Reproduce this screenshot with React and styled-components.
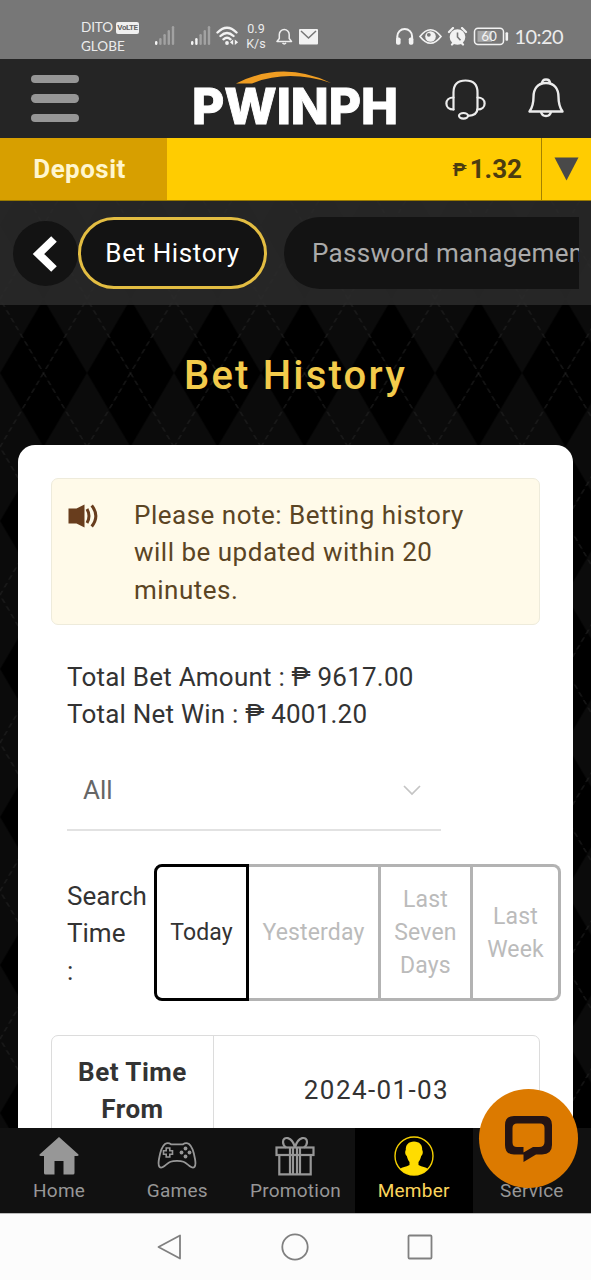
import React, { useState } from "react";
import styled, { createGlobalStyle, css } from "styled-components";

const GlobalStyle = createGlobalStyle`
  * { box-sizing: border-box; }
  body {
    margin: 0;
    background: #0a0a0a;
    font-family: Roboto, "Noto Sans", sans-serif;
  }
  button { font-family: inherit; border: 0; padding: 0; background: none; }
`;

const Screen = styled.div`
  position: relative;
  display: flex;
  flex-direction: column;
  width: 591px;
  height: 1280px;
  overflow: hidden;
`;

/* status bar */
const StatusBar = styled.div`
  flex: none;
  display: flex;
  justify-content: space-between;
  height: 59px;
  padding: 18px 28px 0 81px;
  background: #777;
  color: #ececec;
`;
const StatusLeft = styled.div`
  display: flex;
  align-items: flex-start;
`;
const Carriers = styled.div`
  width: 74px;
  font-family: Lato, sans-serif;
  font-size: 13.5px;
  line-height: 19px;
  font-weight: 400;
`;
const Carrier = styled.div`
  display: flex;
  align-items: center;
  height: 19px;
  letter-spacing: ${(p) => p.$spacing || "0"};
`;
const Volte = styled.span`
  width: 23px;
  height: 12px;
  margin-left: 3px;
  border-radius: 2px;
  background: #f0f0f0;
  color: #666;
  font: 700 8px/12px Roboto, sans-serif;
  text-align: center;
  letter-spacing: -0.4px;
`;
const Speed = styled.div`
  width: 22px;
  margin: 3px 0 0 6px;
  font-size: 12.5px;
  line-height: 15px;
  text-align: center;
`;
const StatusRight = styled.div`
  display: flex;
  align-items: flex-start;
`;
const Clock = styled.div`
  margin-left: 4px;
  padding-top: 6px;
  font-family: Lato, sans-serif;
  font-size: 20px;
  line-height: 24px;
  font-weight: 400;
  letter-spacing: -0.6px;
`;

/* header */
const Header = styled.header`
  flex: none;
  display: flex;
  align-items: center;
  height: 79px;
  padding: 0 25px 0 31px;
  background: #252525;
`;
const Burger = styled.button`
  display: flex;
  flex-direction: column;
  gap: 11px;
  width: 48px;
  & > i {
    height: 8.5px;
    border-radius: 5px;
    background: #969696;
  }
`;
const LogoWrap = styled.div`
  width: 208px;
  height: 79px;
  margin: 0 45px 0 112px;
`;
const HeaderIcons = styled.div`
  display: flex;
  justify-content: space-between;
  flex: 1;
`;

/* wallet */
const Wallet = styled.div`
  flex: none;
  display: flex;
  height: 63px;
  background: #ffcc01;
  border-bottom: 1px solid #9a7a00;
`;
const DepositButton = styled.button`
  width: 167px;
  padding-right: 8px;
  background: #d79f00;
  color: #fff6cf;
  font-size: 26px;
  font-weight: 700;
  letter-spacing: 0.45px;
`;
const Balance = styled.div`
  flex: 1;
  display: flex;
  align-items: center;
  justify-content: flex-end;
  gap: 3px;
  padding-right: 19px;
  border-right: 1px solid #a58200;
  color: #4c3d10;
  font-size: 26px;
  font-weight: 700;
  & > small { font-size: 19px; }
`;
const Expand = styled.button`
  display: flex;
  align-items: center;
  justify-content: center;
  width: 49px;
`;

/* page body */
const Body = styled.main`
  position: relative;
  flex: 1;
  min-height: 0;
  overflow: hidden;
  background: #0a0a0a;
`;
const Argyle = styled.svg`
  position: absolute;
  inset: 0;
  width: 100%;
  height: 100%;
`;
const Content = styled.div`
  position: relative;
`;
const TabStrip = styled.div`
  display: flex;
  align-items: center;
  height: 104px;
  padding: 0 12px 0 13px;
  background: rgba(43, 43, 43, 0.85);
`;
const BackButton = styled.button`
  display: flex;
  align-items: center;
  justify-content: center;
  flex: none;
  width: 65px;
  height: 65px;
  border-radius: 50%;
  background: #131313;
`;
const Tabs = styled.div`
  display: flex;
  gap: 17px;
  flex: 1;
  overflow: hidden;
`;
const Tab = styled.button`
  flex: none;
  height: 72px;
  padding: 0 28px;
  border-radius: 36px;
  background: #131313;
  color: #aaa;
  font-size: 26px;
  letter-spacing: ${(p) => p.$spacing}px;
  white-space: nowrap;
  ${(p) =>
    p.$active &&
    css`
      width: 189px;
      padding: 0;
      border: 3px solid #e3bd42;
      color: #fff;
    `}
`;
const Title = styled.h1`
  margin: 0;
  padding-top: 1px;
  height: 140px;
  color: #f3cb4b;
  font-size: 40px;
  font-weight: 500;
  line-height: 140px;
  letter-spacing: 2.2px;
  text-align: center;
`;
const Card = styled.section`
  margin: 0 18px;
  height: 760px;
  padding: 33px 33px 0;
  border-radius: 17px 17px 0 0;
  background: #fff;
  color: #333;
  font-size: 26px;
  line-height: 37.4px;
`;
const Notice = styled.div`
  display: flex;
  height: 147px;
  padding: 18px 16px 0;
  border: 1.5px solid #eeebdb;
  border-radius: 7px;
  background: #fffae9;
  color: #5b4524;
  & > svg { flex: none; margin: 7px 35px 0 0; }
  & > p { margin: 0; width: 350px; letter-spacing: 0.5px; }
`;
const Totals = styled.div`
  margin: 34px 0 0 16px;
  letter-spacing: 0.22px;
`;
const SelectBox = styled.div`
  display: flex;
  align-items: center;
  justify-content: space-between;
  width: 374px;
  height: 79px;
  margin: 18px 0 0 16px;
  padding: 0 20px 0 16px;
  border-bottom: 2px solid #e2e2e2;
  color: #666;
`;
const SearchRow = styled.div`
  display: flex;
  align-items: flex-start;
  margin: 33px -21px 0 16px;
`;
const SearchLabel = styled.div`
  width: 87px;
  padding-top: 14px;
`;
const Segments = styled.div`
  display: flex;
  height: 137px;
`;
const Segment = styled.button`
  width: ${(p) => p.$width}px;
  padding-top: 1px;
  border: 3px solid ${(p) => (p.$active ? "#000" : "#b3b3b3")};
  border-left-width: ${(p) => (p.$active ? 3 : 0)}px;
  color: ${(p) => (p.$active ? "#333" : "#bbb")};
  font-size: 23px;
  line-height: 33px;
  letter-spacing: 0.15px;
  &:first-child { border-radius: 8px 0 0 8px; }
  &:last-child { border-radius: 0 8px 8px 0; }
`;
const RangeTable = styled.div`
  display: flex;
  width: 489px;
  height: 111px;
  margin-top: 34px;
  border: 1.5px solid #dcdcdc;
  border-radius: 7px;
`;
const RangeHead = styled.div`
  width: 162px;
  padding: 18px 20px 0;
  border-right: 1.5px solid #dcdcdc;
  font-weight: 700;
  letter-spacing: 0.5px;
  text-align: center;
`;
const RangeValue = styled.div`
  flex: 1;
  display: flex;
  align-items: center;
  justify-content: center;
  letter-spacing: 1.4px;
`;

/* bottom bars */
const TabBar = styled.nav`
  flex: none;
  display: grid;
  grid-template-columns: repeat(5, 1fr);
  height: 85px;
  background: #111;
`;
const TabItem = styled.a`
  display: flex;
  flex-direction: column;
  align-items: center;
  padding-top: 8px;
  background: ${(p) => (p.$active ? "#000" : "transparent")};
  color: ${(p) => (p.$active ? "#fbd55c" : "#979797")};
  & > span {
    margin-top: 2px;
    font-size: 19px;
    line-height: 25px;
    letter-spacing: 0.25px;
  }
`;
const SystemNav = styled.div`
  flex: none;
  display: flex;
  align-items: center;
  justify-content: center;
  gap: 98px;
  height: 67px;
  padding-right: 2px;
  border-top: 1px solid #bbb;
  background: #fcfcfc;
`;
const ChatButton = styled.button`
  position: absolute;
  right: 13px;
  top: 1089px;
  display: flex;
  align-items: center;
  justify-content: center;
  width: 99px;
  height: 99px;
  border-radius: 50%;
  background: #dc7a00;
`;

const Signal = ({ strong, gap }) => (
  <svg width="20" height="20" viewBox="0 0 20 20" style={{ marginTop: 8, marginRight: gap }}>
    {[4, 7, 11, 15, 19].map((h, i) => (
      <rect key={h} x={i * 4.2} y={19 - h} width="2.4" height={h} rx="1.2" fill={i < strong ? "#f4f4f4" : "#a2a2a2"} />
    ))}
  </svg>
);

const Wifi = () => (
  <svg width="23" height="20" viewBox="0 0 23 20" fill="none" stroke="#f2f2f2" strokeWidth="2.4" style={{ marginTop: 8 }}>
    <path d="M1.5 6.5Q11 -3 20.5 6.5M4.500 10Q11 3.800 17.500 10M7.500 13.300Q11 10 14.500 13.300" strokeLinecap="round" />
    <circle cx="11" cy="17" r="1.900" fill="#f2f2f2" stroke="none" />
    <path d="M17.200 13.500v5.500l-3.300-2.750zM18.800 13.500v5.500l3.300-2.750z" fill="#f2f2f2" stroke="none" />
  </svg>
);

const StatusIcons = () => (
  <svg width="46" height="20" viewBox="0 0 46 20" style={{ marginTop: 9, marginLeft: 9 }}>
    <path d="M1 14.500h14.500l-2.300-3V7.500a4.950 5 0 0 0-9.900 0v4zM6.500 16q1.750 1.800 3.500 0" fill="none" stroke="#eee" strokeWidth="1.500" strokeLinejoin="round" />
    <rect x="23" y="2" width="19" height="15.500" rx="1" fill="#f2f2f2" />
    <path d="M25 4l7.500 7 7.500-7" fill="none" stroke="#777" strokeWidth="1.500" />
  </svg>
);

const RightIcons = () => (
  <svg width="116" height="20" viewBox="0 0 116 20" style={{ marginTop: 9 }}>
    <path d="M2.300 12V9.400a7.400 7.400 0 0 1 14.800 0V12" fill="none" stroke="#f2f2f2" strokeWidth="2" />
    <rect x="1" y="10.500" width="4.600" height="7.200" rx="1.800" fill="#f2f2f2" />
    <rect x="13.800" y="10.500" width="4.600" height="7.200" rx="1.800" fill="#f2f2f2" />
    <path d="M25 9.500q10.500 -13.500 21 0q-10.500 13.500 -21 0z" fill="none" stroke="#f2f2f2" strokeWidth="1.700" />
    <circle cx="35.500" cy="9.500" r="5.300" fill="#f2f2f2" />
    <circle cx="33.800" cy="7.800" r="1.900" fill="#777" />
    <circle cx="62.500" cy="10" r="7.800" fill="#f2f2f2" />
    <path d="M54 5l4-4M71 5l-4-4M57 17.500l1.500-1.500M68 17.500l-1.500-1.500" stroke="#f2f2f2" strokeWidth="2.200" strokeLinecap="round" />
    <path d="M62.500 5.500V10l3 3.300" fill="none" stroke="#777" strokeWidth="1.600" />
    <rect x="79.500" y="1.200" width="29" height="16.300" rx="3.500" fill="none" stroke="#f2f2f2" strokeWidth="1.500" />
    <rect x="82.500" y="4" width="14.500" height="10.800" fill="#a8a8a8" />
    <text x="94" y="14.300" fontSize="13.500" fontFamily="Lato" fill="#f2f2f2" textAnchor="middle">60</text>
    <rect x="110.500" y="5.200" width="2.600" height="8.500" rx="1" fill="#f2f2f2" />
  </svg>
);

const Logo = () => (
  <svg width="208" height="79" viewBox="0 0 208 79">
    <path d="M45 24.500Q92 1 140 24Q97 10 61 24.500z" fill="#ef9d22" />
    <text x="1" y="65" fill="#fff" stroke="#fff" strokeWidth="0.900" fontFamily="Inter" fontWeight="800" fontSize="50" textLength="206" lengthAdjust="spacingAndGlyphs">
      PWINPH
    </text>
  </svg>
);

const Headset = () => (
  <svg width="42" height="42" viewBox="0 0 42 42" fill="none" stroke="#ececec" strokeWidth="2.200" strokeLinecap="round">
    <path d="M9.500 31.500V14.500Q9.500 2.500 21.500 2.500Q33.500 2.500 33.500 14.500V30Q33.500 37.500 24 37.800" />
    <path d="M9.500 19.500C0 19.500 0 31.500 9.500 31.500M33.500 19.500C43 19.500 43 31.500 33.500 31.500" />
    <ellipse cx="19.500" cy="37.800" rx="4.500" ry="2.800" />
  </svg>
);

const Bell = () => (
  <svg width="40" height="42" viewBox="0 0 40 42" fill="none" stroke="#ececec" strokeWidth="2.400" strokeLinejoin="round">
    <path d="M20 5C11.500 5 7.500 11 7.500 19C7.500 27 6 30 3.500 33.500H36.500C34 30 32.500 27 32.500 19C32.500 11 28.500 5 20 5z" />
    <path d="M16 5.500Q16 1.500 20 1.500Q24 1.500 24 5.500M15 34Q16 38 20 38Q24 38 25 34" />
  </svg>
);

const Speaker = () => (
  <svg width="31" height="24" viewBox="0 0 31 24">
    <path d="M0.500 4.500H8.500L16.500 0.500V23.500L8.500 19.500H0.500z" fill="#683d1d" />
    <path d="M19 5Q23 12 19 19M23.700 1.500Q32 12 23.700 22.500" fill="none" stroke="#683d1d" strokeWidth="3" />
  </svg>
);

const icons = {
  home: <path d="M20 1L0.500 18.500Q0 20 2 20H5V37Q5 38.500 6.500 38.500H15.500V25H24.500V38.500H34Q35.500 38.500 35.500 37V20H38Q40 20 39.500 18.500z" fill="#979797" />,
  games: (
    <g fill="none" stroke="#979797" strokeWidth="1.800">
      <path d="M8 8Q11 6 14 8.300H26Q29 6 32 8Q36 11 38 23C39.500 31 37 33.500 32.500 30C28 26.500 27 24.800 20 24.800C13 24.800 12 26.500 7.500 30C3 33.500 0.500 31 2 23Q4 11 8 8z" />
      <path d="M9.200 12h3.600v2.700h2.700v3.600h-2.700v2.700h-3.600v-2.700h-2.700v-3.600h2.700z" strokeWidth="1.600" />
      <g fill="#979797" stroke="none">
        <circle cx="28.500" cy="12.500" r="1.900" />
        <circle cx="28.500" cy="20.500" r="1.900" />
        <circle cx="24.500" cy="16.500" r="1.900" />
        <circle cx="32.500" cy="16.500" r="1.900" />
      </g>
    </g>
  ),
  promotion: (
    <g fill="none" stroke="#979797" strokeWidth="2.200">
      <rect x="1.500" y="11.500" width="37" height="7.500" />
      <path d="M4.300 19V38.300H35.700V19M15 12V38M18 12V38M22 12V38M25 12V38" />
      <path d="M20 11.500C17 0 8 0 8 6C8 9 9 10 11 11.500M20 11.500C23 0 32 0 32 6C32 9 31 10 29 11.500" />
    </g>
  ),
  member: (
    <g>
      <circle cx="20" cy="20" r="19" fill="none" stroke="#f5d000" strokeWidth="1.400" />
      <path d="M20 5.500C25.500 5.500 28.500 9 28.200 14C29.500 16 28.500 19 27.200 20C26.500 23 25.500 25 24.500 26V29C28 31 32 31 34 33Q28 39 20 39Q12 39 6 33C8 31 12 31 15.500 29V26C14.500 25 13.500 23 12.800 20C11.500 19 10.500 16 11.800 14C11.500 9 14.500 5.500 20 5.500z" fill="#ffdc00" />
    </g>
  ),
  service: (
    <g fill="none" stroke="#979797" strokeWidth="2.200">
      <circle cx="20" cy="20" r="17" />
    </g>
  ),
};

const navItems = [
  { id: "home", label: "Home" },
  { id: "games", label: "Games" },
  { id: "promotion", label: "Promotion" },
  { id: "member", label: "Member" },
  { id: "service", label: "Service" },
];

const ranges = [
  { label: "Today", width: 95 },
  { label: "Yesterday", width: 132 },
  { label: "Last Seven Days", width: 92 },
  { label: "Last Week", width: 88 },
];

const ArgylePattern = () => (
  <Argyle>
    <defs>
      <pattern id="argyle" x="43.500" y="172" width="87" height="148" patternUnits="userSpaceOnUse">
        <rect width="87" height="148" fill="#0b0b0b" />
        <path
          d="M0 0L21.750 37L0 74L-21.750 37zM87 0L108.750 37L87 74L65.250 37zM0 74L21.750 111L0 148L-21.750 111zM87 74L108.750 111L87 148L65.250 111z"
          fill="#000"
        />
        <path d="M0 0L21.750 37L43.500 0L65.250 37L87 0zM0 148L21.750 111L43.500 148L65.250 111L87 148z" fill="#000" />
        <path d="M0 0L87 148M87 0L0 148" stroke="#242424" strokeWidth="1" strokeDasharray="5 4" />
      </pattern>
    </defs>
    <rect width="100%" height="100%" fill="url(#argyle)" />
  </Argyle>
);

const App = () => {
  const [range, setRange] = useState("Today");
  const [page, setPage] = useState("member");

  return (
    <React.Fragment>
      <GlobalStyle />
      <Screen>
        <StatusBar>
          <StatusLeft>
            <Carriers>
              <Carrier $spacing="-0.1px">
                DITO <Volte>VoLTE</Volte>
              </Carrier>
              <Carrier>GLOBE</Carrier>
            </Carriers>
            <Signal strong={1} gap={16} />
            <Signal strong={2} gap={5} />
            <Wifi />
            <Speed>
              0.9
              <br />
              K/s
            </Speed>
            <StatusIcons />
          </StatusLeft>
          <StatusRight>
            <RightIcons />
            <Clock>10:20</Clock>
          </StatusRight>
        </StatusBar>
        <Header>
          <Burger>
            <i />
            <i />
            <i />
          </Burger>
          <LogoWrap>
            <Logo />
          </LogoWrap>
          <HeaderIcons>
            <Headset />
            <Bell />
          </HeaderIcons>
        </Header>
        <Wallet>
          <DepositButton>Deposit</DepositButton>
          <Balance>
            <small>₱</small>1.32
          </Balance>
          <Expand>
            <svg width="25" height="24" viewBox="0 0 25 24">
              <path d="M0.500 0.500H24.500L12.500 23.500z" fill="#494949" />
            </svg>
          </Expand>
        </Wallet>
        <Body>
          <ArgylePattern />
          <Content>
            <TabStrip>
              <BackButton>
                <svg width="27" height="38" viewBox="0 0 27 38">
                  <path d="M22 5L6.500 20L22 35" fill="none" stroke="#fff" strokeWidth="8" />
                </svg>
              </BackButton>
              <Tabs>
                <Tab $active $spacing={0.6}>
                  Bet History
                </Tab>
                <Tab $spacing={0.3}>Password management</Tab>
              </Tabs>
            </TabStrip>
            <Title>Bet History</Title>
            <Card>
              <Notice>
                <Speaker />
                <p>Please note: Betting history will be updated within 20 minutes.</p>
              </Notice>
              <Totals>
                <div>Total Bet Amount : ₱ 9617.00</div>
                <div>Total Net Win : ₱ 4001.20</div>
              </Totals>
              <SelectBox>
                All
                <svg width="18" height="11" viewBox="0 0 18 11">
                  <path d="M1 1L9 9L17 1" fill="none" stroke="#c4c4c4" strokeWidth="1.700" />
                </svg>
              </SelectBox>
              <SearchRow>
                <SearchLabel>
                  Search
                  <br />
                  Time
                  <br />:
                </SearchLabel>
                <Segments>
                  {ranges.map((item) => (
                    <Segment
                      key={item.label}
                      $width={item.width}
                      $active={item.label === range}
                      onClick={() => setRange(item.label)}
                    >
                      {item.label}
                    </Segment>
                  ))}
                </Segments>
              </SearchRow>
              <RangeTable>
                <RangeHead>Bet Time From</RangeHead>
                <RangeValue>2024-01-03</RangeValue>
              </RangeTable>
            </Card>
          </Content>
        </Body>
        <TabBar>
          {navItems.map((item) => (
            <TabItem key={item.id} $active={item.id === page} onClick={() => setPage(item.id)}>
              <svg width="40" height="40" viewBox="0 0 40 40">
                {icons[item.id]}
              </svg>
              <span>{item.label}</span>
            </TabItem>
          ))}
        </TabBar>
        <SystemNav>
          <svg width="27" height="28" viewBox="0 0 27 28">
            <path d="M24 2.500V25.500L2.500 14z" fill="none" stroke="#808080" strokeWidth="1.800" strokeLinejoin="round" />
          </svg>
          <svg width="28" height="28" viewBox="0 0 28 28">
            <circle cx="14" cy="14" r="12.700" fill="none" stroke="#808080" strokeWidth="1.800" />
          </svg>
          <svg width="26" height="26" viewBox="0 0 26 26">
            <rect x="1.500" y="1.500" width="23" height="23" rx="1" fill="none" stroke="#808080" strokeWidth="1.800" />
          </svg>
        </SystemNav>
        <ChatButton>
          <svg width="47" height="46" viewBox="0 0 47 46">
            <path
              d="M9 0H38Q47 0 47 9V29Q47 38 37 38.500H31L18.500 46V38.500H9Q0 38.500 0 29V9Q0 0 9 0zM12 7.500Q7.500 7.500 7.500 12V26.500Q7.500 31 12 31H18.500V36.500L28 31H34Q39.500 31 39.500 26V12Q39.500 7.500 35 7.500z"
              fill="#241414"
              fillRule="evenodd"
            />
          </svg>
        </ChatButton>
      </Screen>
    </React.Fragment>
  );
};

export default App;
